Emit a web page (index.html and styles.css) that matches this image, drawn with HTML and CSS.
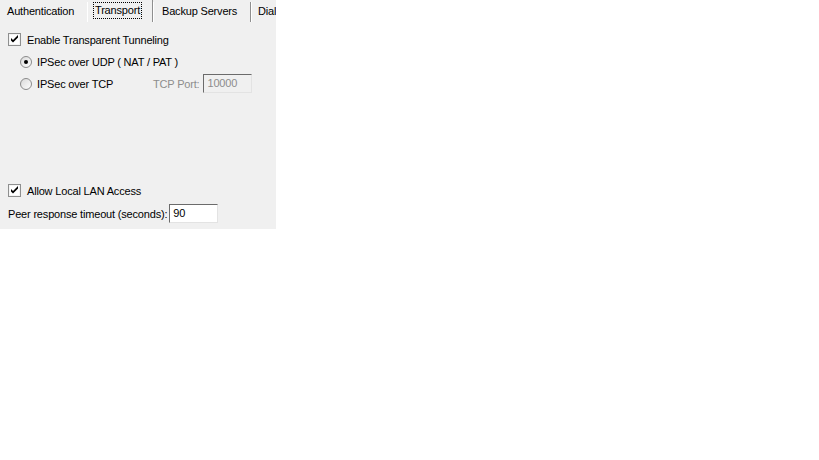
FILE: index.html
```html
<!DOCTYPE html>
<html>
<head>
<meta charset="utf-8">
<link rel="stylesheet" href="styles.css">
</head>
<body>
<div class="panel">
  <div class="tabs">
    <div class="tab tab-auth">Authentication</div>
    <div class="tab tab-sel"><span class="focus">Transport</span></div>
    <div class="tab tab-backup">Backup Servers</div>
    <div class="tab tab-dial">Dial</div>
  </div>
  <div class="content">
    <div class="row row-enable">
      <span class="check"><svg width="13" height="13" viewBox="0 0 13 13"><rect x="0.5" y="0.5" width="12" height="12" fill="#fff" stroke="#8e8f8f"/><rect x="1.5" y="1.5" width="10" height="10" fill="none" stroke="#f4f4f4"/><path d="M3 5 L3 7.5 L5 9.5 L10 4.5 L10 2 L5 7 Z" fill="#000"/></svg></span>
      <span class="label">Enable Transparent Tunneling</span>
    </div>
    <div class="row row-radio1">
      <span class="radio"><svg width="12" height="12" viewBox="0 0 12 12"><defs><linearGradient id="rg" x1="0" y1="0" x2="1" y2="1"><stop offset="0" stop-color="#d8d8d8"/><stop offset="1" stop-color="#ffffff"/></linearGradient></defs><circle cx="6" cy="6" r="5.5" fill="url(#rg)" stroke="#8a8a8a"/><circle cx="6" cy="6" r="2" fill="#000"/></svg></span>
      <span class="label">IPSec over UDP ( NAT / PAT )</span>
    </div>
    <div class="row row-radio2">
      <span class="radio"><svg width="12" height="12" viewBox="0 0 12 12"><defs><linearGradient id="rg2" x1="0" y1="0" x2="1" y2="1"><stop offset="0" stop-color="#d8d8d8"/><stop offset="1" stop-color="#ffffff"/></linearGradient></defs><circle cx="6" cy="6" r="5.5" fill="url(#rg2)" stroke="#8a8a8a"/></svg></span>
      <span class="label tcp-label">IPSec over TCP</span>
      <span class="label port-label">TCP Port:</span>
      <span class="input input-port">10000</span>
    </div>
    <div class="spacer"></div>
    <div class="row row-lan">
      <span class="check"><svg width="13" height="13" viewBox="0 0 13 13"><rect x="0.5" y="0.5" width="12" height="12" fill="#fff" stroke="#8e8f8f"/><rect x="1.5" y="1.5" width="10" height="10" fill="none" stroke="#f4f4f4"/><path d="M3 5 L3 7.5 L5 9.5 L10 4.5 L10 2 L5 7 Z" fill="#000"/></svg></span>
      <span class="label">Allow Local LAN Access</span>
    </div>
    <div class="row row-peer">
      <span class="label">Peer response timeout (seconds):</span>
      <span class="input input-peer">90</span>
    </div>
  </div>
</div>
</body>
</html>
```
FILE: styles.css
```css
html, body {
  margin: 0;
  padding: 0;
  background: #ffffff;
}
body {
  font-family: "Liberation Sans", Arial, sans-serif;
  font-size: 11px;
  letter-spacing: -0.18px;
  color: #000;
}
.panel {
  width: 276px;
  height: 229px;
  background: #f0f0f0;
  overflow: hidden;
  display: flex;
  flex-direction: column;
}
.tabs {
  display: flex;
  height: 22px;
  align-items: flex-end;
  white-space: nowrap;
  flex: none;
}
.tab {
  box-sizing: border-box;
  height: 20px;
  line-height: 19px;
  flex: none;
}
.tab-auth {
  width: 88px;
  padding-left: 7px;
  border-right: 1px solid #ffffff;
}
.tab-sel {
  width: 65px;
  height: 22px;
  padding-left: 6px;
  padding-top: 2px;
  border-right: 1px solid #8f8f8f;
  line-height: 16px;
}
.focus {
  display: inline-block;
  outline: 1px dotted #000;
  padding: 0 1px;
  line-height: 15px;
}
.tab-backup {
  width: 98px;
  padding-left: 8px;
  border-left: 1px solid #ffffff;
  border-right: 1px solid #8f8f8f;
}
.tab-dial {
  width: 25px;
  padding-left: 6px;
  border-left: 1px solid #ffffff;
}
.content {
  display: flex;
  flex-direction: column;
  padding-left: 8px;
  flex: 1;
}
.row {
  display: flex;
  align-items: center;
  height: 13px;
}
.check {
  width: 13px;
  height: 13px;
  display: block;
  margin-right: 6px;
}
.check svg, .radio svg { display: block; }
.radio {
  width: 12px;
  height: 12px;
  margin-left: 12px;
  margin-right: 5px;
  display: block;
}
.row-enable { margin-top: 11px; }
.row-radio1 { margin-top: 9px; }
.row-radio2 { margin-top: 9px; }
.tcp-label { width: 116px; }
.port-label { color: #8d8d8d; margin-right: 4px; }
.input {
  box-sizing: border-box;
  height: 19px;
  line-height: 16px;
  padding-left: 3px;
  border-top: 1px solid #6b6b6b;
  border-left: 1px solid #6b6b6b;
  border-right: 1px solid #e3e3e3;
  border-bottom: 1px solid #e3e3e3;
  display: block;
}
.input-port {
  width: 49px;
  background: #f0f0f0;
  color: #8d8d8d;
}
.input-peer {
  width: 49px;
  background: #fff;
  margin-left: 2px;
}
.spacer { flex: 1; }
.row-lan { margin-bottom: 7px; }
.row-peer { height: 19px; margin-bottom: 6px; }
```
